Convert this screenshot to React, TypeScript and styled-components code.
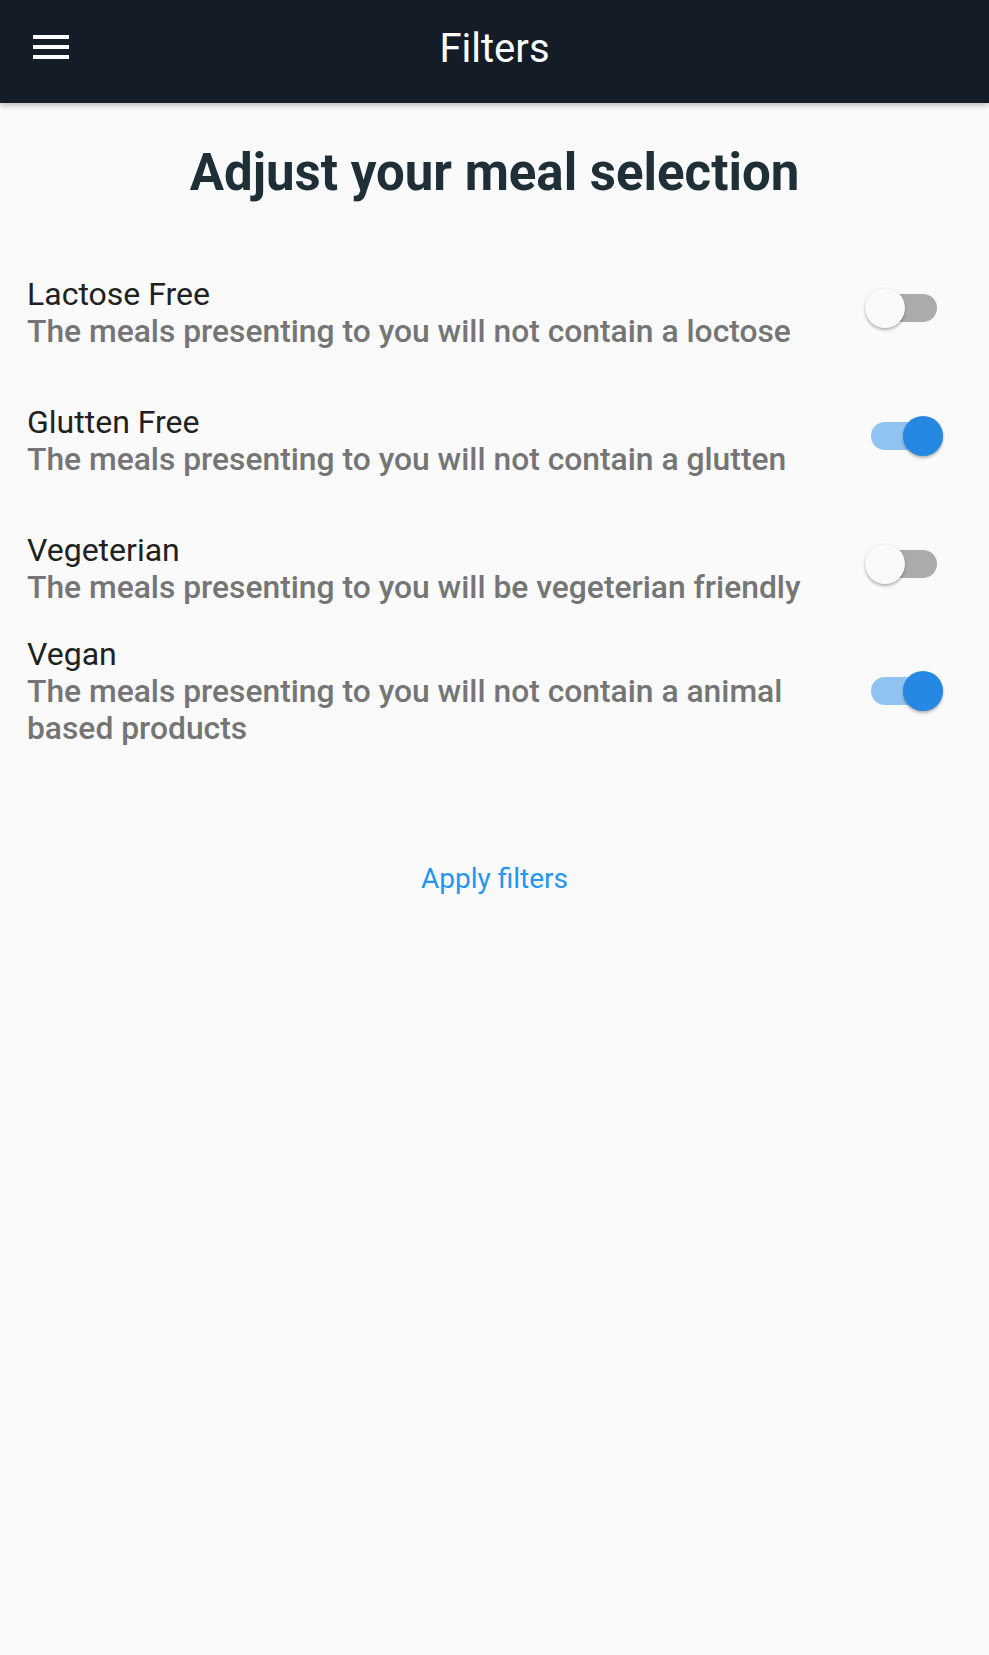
import React, { useState } from "react";
import styled, { createGlobalStyle } from "styled-components";

const GlobalStyle = createGlobalStyle`
  html, body {
    margin: 0;
    padding: 0;
    background: #fafafa;
  }
  body {
    font-family: Roboto, "Noto Sans", "Liberation Sans", sans-serif;
  }
  * { box-sizing: border-box; }
`;

const Page = styled.div`
  min-height: 1655px;
  background: #fafafa;
  display: flex;
  flex-direction: column;
`;

const Header = styled.header`
  position: relative;
  height: 103px;
  background: #141d27;
  display: flex;
  align-items: center;
  justify-content: center;
  box-shadow: 0 2px 6px rgba(0, 0, 0, 0.28);
  z-index: 1;
`;

const MenuButton = styled.button`
  position: absolute;
  left: 27px;
  top: 23px;
  width: 48px;
  height: 48px;
  padding: 0;
  border: none;
  background: transparent;
  display: flex;
  align-items: center;
  justify-content: center;
`;

const HeaderTitle = styled.h1`
  margin: 0;
  margin-top: -6px;
  font-family: Roboto, sans-serif;
  font-weight: 400;
  font-size: 40px;
  color: #ffffff;
`;

const Content = styled.main`
  display: flex;
  flex-direction: column;
  padding: 0 27px;
`;

const Title = styled.h2`
  margin: 39px 0 0;
  text-align: center;
  font-family: Roboto, sans-serif;
  font-weight: 700;
  font-size: 51px;
  line-height: 62px;
  color: #1f2f38;
`;

const List = styled.div`
  display: flex;
  flex-direction: column;
  margin-top: 71px;
`;

const Row = styled.div<{ $gap: number }>`
  display: flex;
  align-items: center;
  justify-content: space-between;
  margin-top: ${(p) => p.$gap}px;
`;

const TextCol = styled.div`
  display: flex;
  flex-direction: column;
  max-width: 800px;
`;

const Label = styled.div`
  font-family: Roboto, sans-serif;
  font-size: 32px;
  line-height: 38px;
  color: #212121;
`;

const Description = styled.div`
  font-family: Roboto, sans-serif;
  font-weight: 500;
  font-size: 31.8px;
  line-height: 37px;
  color: #757575;
`;

const SwitchWrap = styled.button<{ $lift: number }>`
  position: relative;
  flex: none;
  width: 78px;
  height: 40px;
  margin-right: 19px;
  margin-bottom: ${(p) => p.$lift * 2}px;
  padding: 0;
  border: none;
  background: transparent;
  cursor: pointer;
`;

const Track = styled.span<{ $on: boolean }>`
  position: absolute;
  left: 6px;
  top: 6px;
  width: 66px;
  height: 28px;
  border-radius: 14px;
  background: ${(p) => (p.$on ? "#90c3f1" : "#ababab")};
`;

const Thumb = styled.span<{ $on: boolean }>`
  position: absolute;
  top: 0;
  left: ${(p) => (p.$on ? "38px" : "0px")};
  width: 40px;
  height: 40px;
  border-radius: 50%;
  background: ${(p) => (p.$on ? "#2589e3" : "#fafafa")};
  box-shadow: 0 2px 3px rgba(0, 0, 0, 0.28), 0 0 1px rgba(0, 0, 0, 0.12);
`;

const ApplyButton = styled.button`
  align-self: center;
  margin-top: 114px;
  padding: 0;
  border: none;
  background: transparent;
  font-family: Roboto, sans-serif;
  font-size: 28px;
  line-height: 36px;
  color: #2196f3;
  cursor: pointer;
`;

const MenuIcon = () => (
  <svg width="48" height="48" viewBox="0 0 48 48" aria-hidden="true">
    <rect x="6" y="12" width="36" height="4" fill="#ffffff" />
    <rect x="6" y="22" width="36" height="4" fill="#ffffff" />
    <rect x="6" y="32" width="36" height="4" fill="#ffffff" />
  </svg>
);

type Filter = { key: string; label: string; desc: string; gap: number; lift: number };

const filters: Filter[] = [
  { key: "lactose", label: "Lactose Free", desc: "The meals presenting to you will not contain a loctose", gap: 0, lift: 5 },
  { key: "gluten", label: "Glutten Free", desc: "The meals presenting to you will not contain a glutten", gap: 53, lift: 5 },
  { key: "veg", label: "Vegeterian", desc: "The meals presenting to you will be vegeterian friendly", gap: 53, lift: 5 },
  { key: "vegan", label: "Vegan", desc: "The meals presenting to you will not contain a animal based products", gap: 29, lift: 0 },
];

export default function App() {
  const [state, setState] = useState<Record<string, boolean>>({
    lactose: false,
    gluten: true,
    veg: false,
    vegan: true,
  });

  return (
    <>
      <GlobalStyle />
      <Page>
        <Header>
          <MenuButton aria-label="menu">
            <MenuIcon />
          </MenuButton>
          <HeaderTitle>Filters</HeaderTitle>
        </Header>
        <Content>
          <Title>Adjust your meal selection</Title>
          <List>
            {filters.map((f) => (
              <Row key={f.key} $gap={f.gap}>
                <TextCol>
                  <Label>{f.label}</Label>
                  <Description>{f.desc}</Description>
                </TextCol>
                <SwitchWrap
                  $lift={f.lift}
                  onClick={() => setState((s) => ({ ...s, [f.key]: !s[f.key] }))}
                  aria-pressed={state[f.key]}
                >
                  <Track $on={state[f.key]} />
                  <Thumb $on={state[f.key]} />
                </SwitchWrap>
              </Row>
            ))}
          </List>
          <ApplyButton>Apply filters</ApplyButton>
        </Content>
      </Page>
    </>
  );
}
